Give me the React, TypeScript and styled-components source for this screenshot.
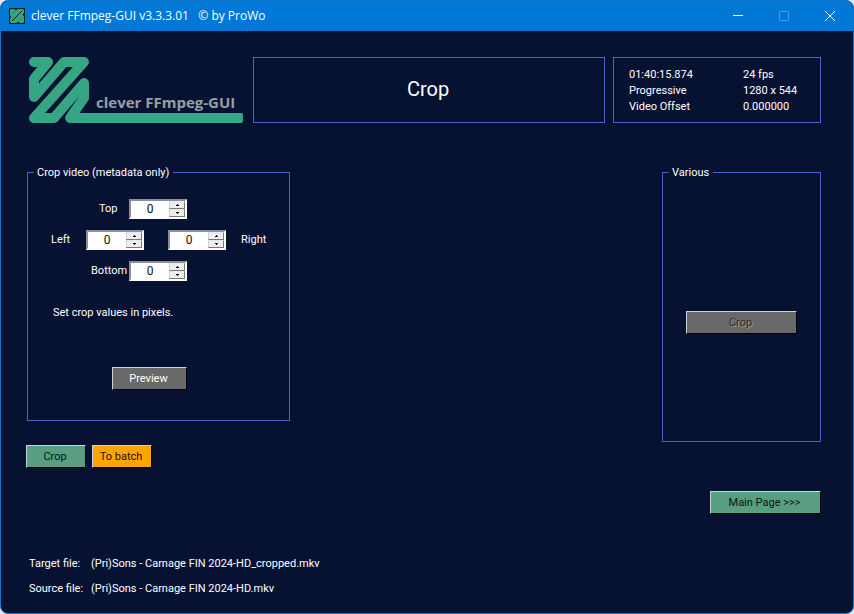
import React, { useState } from "react";
import styled, { createGlobalStyle } from "styled-components";

const GlobalStyle = createGlobalStyle`
  html, body {
    margin: 0;
    background: #dfe7ee;
  }
  *, *::before, *::after {
    box-sizing: border-box;
  }
  button, input {
    font: inherit;
    margin: 0;
  }
`;

const Window = styled.div`
  display: flex;
  flex-direction: column;
  min-height: 100vh;
  border: 1px solid #1173c4;
  border-radius: 8px;
  overflow: hidden;
  background: #071233;
  color: #fff;
  font: 11px/16px Roboto, "Liberation Sans", sans-serif;
`;

const TitleBar = styled.header`
  display: flex;
  align-items: center;
  height: 30px;
  padding-left: 8px;
  gap: 6px;
  background: #0078d7;
`;

const WindowTitle = styled.h1`
  flex: 1;
  margin: 0;
  font: 12px/16px "Open Sans", "Noto Sans", sans-serif;
  white-space: pre;
`;

const CaptionButtons = styled.div`
  display: flex;
`;

const CaptionButton = styled.button`
  display: flex;
  align-items: center;
  justify-content: center;
  width: 46px;
  height: 30px;
  padding: 0;
  border: 0;
  background: none;
  color: #fff;
  &:disabled {
    color: #42a0ea;
  }
`;

const Client = styled.main`
  flex: 1;
  display: flex;
  flex-direction: column;
  padding: 26px 32px 16px 25px;
`;

const Top = styled.div`
  display: flex;
  gap: 8px;
  height: 66px;
`;

const Logo = styled.svg`
  display: block;
  flex: none;
  width: 219px;
  height: 66px;
`;

const Panel = styled.section`
  border: 1px solid #4a63cc;
`;

const Heading = styled(Panel)`
  flex: 1;
  display: flex;
  align-items: center;
  justify-content: center;
`;

const PageTitle = styled.h2`
  margin: 0;
  padding: 0 2px 2px 0;
  font-size: 20px;
  line-height: 24px;
  font-weight: 400;
`;

const Info = styled(Panel)`
  width: 208px;
  padding: 9px 15px 7px;
`;

const InfoList = styled.dl`
  display: grid;
  grid-template-columns: 114px 1fr;
  margin: 0;
`;

const Term = styled.dt``;

const Value = styled.dd`
  margin: 0;
`;

const Groups = styled.div`
  display: flex;
  justify-content: space-between;
  margin-top: 42px;
`;

const Column = styled.div`
  display: flex;
  flex-direction: column;
`;

const Group = styled.fieldset<{ $width: number; $height: number }>`
  display: block;
  width: ${(p) => p.$width}px;
  min-height: ${(p) => p.$height}px;
  margin: 0 0 0 1px;
  padding: 0;
  border: 1px solid #4a63cc;
`;

const Legend = styled.legend`
  margin-left: 6px;
  padding: 0 4px 0 3px;
  line-height: 15px;
`;

const CropFields = styled.div`
  display: flex;
  flex-direction: column;
  gap: 11px;
  padding-top: 19px;
`;

const FieldRow = styled.div<{ $indent: number }>`
  display: flex;
  align-items: center;
  padding-left: ${(p) => p.$indent}px;
`;

const Label = styled.label<{ $width?: number }>`
  width: ${(p) => (p.$width ? `${p.$width}px` : "auto")};
`;

const RightField = styled.div`
  display: flex;
  flex-direction: row-reverse;
  align-items: center;
  gap: 15px;
  margin-left: 24px;
`;

const SpinBox = styled.span`
  display: flex;
  width: 58px;
  height: 20px;
  border: 2px solid;
  border-color: #8b8f99 #fff #fff #8b8f99;
  background: #fff;
`;

const SpinInput = styled.input`
  width: 38px;
  padding: 0;
  border: 0;
  outline: 0;
  background: #fff;
  color: #111;
  font-size: 12px;
  text-align: center;
  appearance: textfield;
  &::-webkit-inner-spin-button,
  &::-webkit-outer-spin-button {
    appearance: none;
    margin: 0;
  }
`;

const Steps = styled.span`
  display: flex;
  flex-direction: column;
  width: 16px;
`;

const Step = styled.button`
  display: flex;
  align-items: center;
  justify-content: center;
  height: 8px;
  padding: 0;
  border: 1px solid;
  border-color: #e8e8e8 #777 #777 #d0d0d0;
  background: #eee;
  color: #111;
`;

const Hint = styled.p`
  margin: 24px 0 0 25px;
`;

const tones = {
  green: { face: "#5a9e82", text: "#06140e" },
  orange: { face: "#ffa500", text: "#1c1000" },
  grey: { face: "#696969", text: "#fff" },
};

const PushButton = styled.button<{ $tone: keyof typeof tones; $width: number }>`
  display: block;
  width: ${(p) => p.$width}px;
  height: 23px;
  padding: 1px 2px 0 0;
  border: 1px solid;
  border-color: #c9d3dc #000 #000 #c9d3dc;
  background: ${(p) => tones[p.$tone].face};
  color: ${(p) => tones[p.$tone].text};
  line-height: 16px;
  text-align: center;
  &:disabled {
    color: #2c2c2c;
    text-shadow: 1px 1px 0 #9a9a9a;
  }
`;

const PreviewSlot = styled.div`
  margin: 46px 0 0 84px;
`;

const VariousSlot = styled.div`
  margin: 131px 0 0 23px;
`;

const Actions = styled.div`
  display: flex;
  gap: 6px;
  margin-top: 24px;
`;

const Navigation = styled.nav`
  display: flex;
  justify-content: flex-end;
  margin-top: 23px;
`;

const Files = styled.dl`
  display: grid;
  grid-template-columns: 62px 1fr;
  row-gap: 9px;
  margin: auto 0 0 3px;
`;

const SpinControl = ({ id }: { id: string }) => {
  const [value, setValue] = useState(0);
  return (
    <SpinBox>
      <SpinInput
        id={id}
        type="number"
        min={0}
        value={value}
        onChange={(e) => setValue(Number(e.target.value))}
      />
      <Steps>
        <Step type="button" aria-label="Increase" onClick={() => setValue(value + 1)}>
          <svg width="3" height="2" viewBox="0 0 3 2" fill="currentColor" shapeRendering="crispEdges">
            <path d="M1 0h1v1h1v1H0V1h1z" />
          </svg>
        </Step>
        <Step type="button" aria-label="Decrease" onClick={() => setValue(Math.max(0, value - 1))}>
          <svg width="3" height="2" viewBox="0 0 3 2" fill="currentColor" shapeRendering="crispEdges">
            <path d="M0 0h3v1H2v1H1V1H0z" />
          </svg>
        </Step>
      </Steps>
    </SpinBox>
  );
};

const AppIcon = () => (
  <svg width="16" height="16" viewBox="0 0 16 16">
    <path d="M0 0h16v16H0z" fill="#062019" />
    <path
      d="M1 2 2 1h3.500l1.500 1.500L8.500 1H14l1 1v3l-1.500 1.500L15 8.500V14l-1 1h-3.500l-1.500-1.500L7.500 15H2l-1-1v-3.500L2.500 9 1 7.500z"
      fill="#35a583"
    />
    <path d="M3 13 13 3" stroke="#062019" />
    <path d="M3.500 6 6 3.500M10 12.500l2.500-2.500" stroke="#1d6b52" strokeWidth=".8" />
  </svg>
);

export default function App() {
  return (
    <>
      <GlobalStyle />
      <Window>
        <TitleBar>
          <AppIcon />
          <WindowTitle>{"clever FFmpeg-GUI v3.3.3.01   © by ProWo"}</WindowTitle>
          <CaptionButtons>
            <CaptionButton type="button" aria-label="Minimize">
              <svg width="10" height="10" viewBox="0 0 10 10" stroke="currentColor">
                <path d="M0 4.500h10" />
              </svg>
            </CaptionButton>
            <CaptionButton type="button" aria-label="Maximize" disabled>
              <svg width="10" height="10" viewBox="0 0 10 10" stroke="currentColor" fill="none">
                <path d="M.5 .5h9v9h-9z" />
              </svg>
            </CaptionButton>
            <CaptionButton type="button" aria-label="Close">
              <svg width="10" height="10" viewBox="0 0 10 10" stroke="currentColor">
                <path d="M0 0 10 10M10 0 0 10" />
              </svg>
            </CaptionButton>
          </CaptionButtons>
        </TitleBar>
        <Client>
          <Top>
            <Logo viewBox="0 0 219 66" role="img" aria-label="clever FFmpeg-GUI">
              <path
                d="M8 5H22L8 22V40L38 5H58L8 61H28L58 26V41L44 61H212"
                fill="none"
                stroke="#35a583"
                strokeWidth="10"
                strokeLinejoin="round"
                strokeLinecap="round"
              />
              <rect x="180" y="56" width="37" height="10" rx="2" fill="#35a583" />
              <text x="70" y="51" fill="#9a9da6" fontFamily="'Open Sans', 'Noto Sans', sans-serif" fontSize="15" fontWeight="700">
                clever FFmpeg-GUI
              </text>
            </Logo>
            <Heading>
              <PageTitle>Crop</PageTitle>
            </Heading>
            <Info>
              <InfoList>
                <Term>01:40:15.874</Term>
                <Value>24 fps</Value>
                <Term>Progressive</Term>
                <Value>1280 x 544</Value>
                <Term>Video Offset</Term>
                <Value>0.000000</Value>
              </InfoList>
            </Info>
          </Top>
          <Groups>
            <Column>
              <Group $width={263} $height={256}>
                <Legend>Crop video (metadata only)</Legend>
                <CropFields>
                  <FieldRow $indent={71}>
                    <Label htmlFor="crop-top" $width={30}>Top</Label>
                    <SpinControl id="crop-top" />
                  </FieldRow>
                  <FieldRow $indent={23}>
                    <Label htmlFor="crop-left" $width={35}>Left</Label>
                    <SpinControl id="crop-left" />
                    <RightField>
                      <Label htmlFor="crop-right">Right</Label>
                      <SpinControl id="crop-right" />
                    </RightField>
                  </FieldRow>
                  <FieldRow $indent={63}>
                    <Label htmlFor="crop-bottom" $width={38}>Bottom</Label>
                    <SpinControl id="crop-bottom" />
                  </FieldRow>
                </CropFields>
                <Hint>Set crop values in pixels.</Hint>
                <PreviewSlot>
                  <PushButton type="button" $tone="grey" $width={75}>Preview</PushButton>
                </PreviewSlot>
              </Group>
              <Actions>
                <PushButton type="button" $tone="green" $width={60}>Crop</PushButton>
                <PushButton type="button" $tone="orange" $width={60}>To batch</PushButton>
              </Actions>
            </Column>
            <Column>
              <Group $width={159} $height={277}>
                <Legend>Various</Legend>
                <VariousSlot>
                  <PushButton type="button" $tone="grey" $width={111} disabled>Crop</PushButton>
                </VariousSlot>
              </Group>
            </Column>
          </Groups>
          <Navigation>
            <PushButton type="button" $tone="green" $width={111}>{"Main Page >>>"}</PushButton>
          </Navigation>
          <Files>
            <Term>Target file:</Term>
            <Value>(Pri)Sons - Carnage FIN 2024-HD_cropped.mkv</Value>
            <Term>Source file:</Term>
            <Value>(Pri)Sons - Carnage FIN 2024-HD.mkv</Value>
          </Files>
        </Client>
      </Window>
    </>
  );
}
